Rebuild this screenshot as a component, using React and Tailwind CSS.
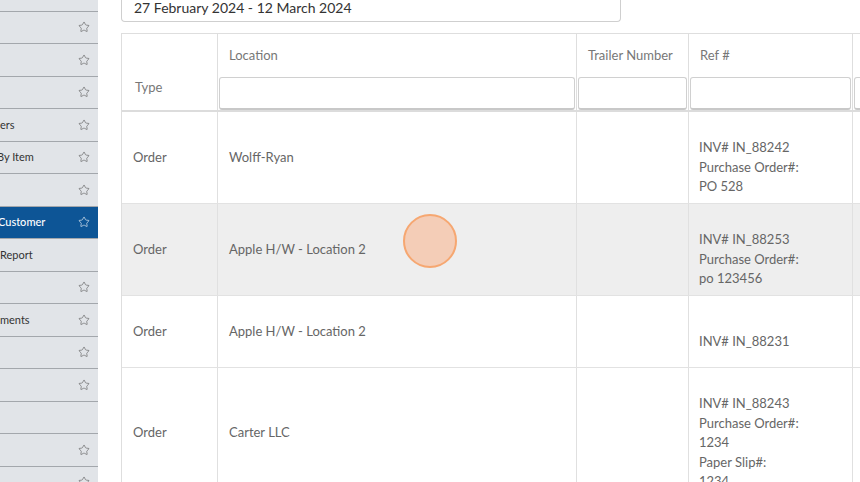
import React from "react";
import { Star } from "lucide-react";

const sideItems = [
  { t: "", star: true },
  { t: "", star: true },
  { t: "", star: true },
  { t: "", star: true },
  { t: "ers", star: true },
  { t: "By Item", star: true, ml: "-ml-[3px]" },
  { t: "", star: true },
  { t: "Customer", star: true, active: true, ml: "-ml-[2px]" },
  { t: "Report", star: false },
  { t: "", star: true },
  { t: "ments", star: true },
  { t: "", star: true },
  { t: "", star: true },
  { t: "", star: false },
  { t: "", star: true },
  { t: "", star: true },
];

const rows = [
  { type: "Order", loc: "Wolff-Ryan", ref: ["INV# IN_88242", "Purchase Order#:", "PO 528"] },
  { type: "Order", loc: "Apple H/W - Location 2", ref: ["INV# IN_88253", "Purchase Order#:", "po 123456"], gray: true },
  { type: "Order", loc: "Apple H/W - Location 2", ref: ["INV# IN_88231"], minH: "min-h-[72px]" },
  { type: "Order", loc: "Carter LLC", ref: ["INV# IN_88243", "Purchase Order#:", "1234", "Paper Slip#:", "1234"] },
];

const cols = "grid grid-cols-[96px_359px_112px_164px_120px]";

function HeaderInput() {
  return (
    <div className="h-[33px] mx-[1px] rounded-[3px] border border-[#d0d0d0] border-b-[2px] border-b-[#c8c8c8] bg-white" />
  );
}

export default function App() {
  return (
    <div
      className="relative w-[860px] h-[482px] overflow-hidden flex bg-white"
      style={{ fontFamily: "Lato, 'Open Sans', sans-serif" }}
    >
      {/* Sidebar */}
      <div className="w-[98px] shrink-0 bg-[#e1e4e8] overflow-hidden">
        <div className="-mt-[21px] flex flex-col">
          {sideItems.map((it, i) => (
            <div
              key={i}
              className={
                "h-[32.5px] shrink-0 flex items-center justify-between pr-[8px] text-[11px] whitespace-nowrap border-b border-[#a3a7ac] " +
                (it.active ? "bg-[#0d5596] text-white font-medium" : "text-[#333]")
              }
            >
              <span className={it.ml || ""}>{it.t}</span>
              {it.star ? (
                <Star size={12} strokeWidth={1.2} className={it.active ? "text-white" : "text-[#555]"} />
              ) : (
                <span />
              )}
            </div>
          ))}
        </div>
      </div>

      {/* Main */}
      <div className="flex-1 pl-[23px]">
        <div className="w-[500px] h-[22px] border border-t-0 border-[#cfcfcf] rounded-b-[4px] pl-[12px] leading-[16px] text-[14px] text-[#333]">
          27 February 2024 - 12 March 2024
        </div>

        <div className="mt-[11px] w-[860px] border-t border-l border-[#dedede] text-[13px]">
          {/* Header */}
          <div className={cols + " border-b-2 border-[#dcdcdc] text-[#777]"}>
            <div className="border-r border-[#dedede] pl-[13px] pt-[43px] leading-[20px] h-[76px]">Type</div>
            {["Location", "Trailer Number", "Ref #", ""].map((h, i) => (
              <div key={i} className="border-r border-[#dedede] flex flex-col">
                <div className="h-[43px] pl-[11px] pt-[11px] leading-[20px] whitespace-nowrap">{h}</div>
                <HeaderInput />
              </div>
            ))}
          </div>

          {/* Body */}
          {rows.map((r, i) => (
            <div
              key={i}
              className={
                cols +
                " border-b border-[#e2e2e2] text-[#666] leading-[19.5px] " +
                (r.gray ? "bg-[#eeeeee] " : "bg-white ") +
                (r.minH || "")
              }
            >
              <div className="border-r border-[#e0e0e0] pl-[11px] flex items-center">{r.type}</div>
              <div className="border-r border-[#e0e0e0] pl-[11px] flex items-center">{r.loc}</div>
              <div className="border-r border-[#e0e0e0]" />
              <div className="border-r border-[#e0e0e0] pl-[10px] py-[6.5px] flex flex-col justify-center">
                <div className="h-[19.5px]" />
                {r.ref.map((l, j) => (
                  <div key={j}>{l}</div>
                ))}
              </div>
              <div />
            </div>
          ))}
        </div>
      </div>

      {/* Click indicator */}
      <div className="absolute left-[403px] top-[214px] w-[54px] h-[54px] rounded-full border-2 border-[#f6a771] bg-[#f6bf9f]/70" />
    </div>
  );
}
